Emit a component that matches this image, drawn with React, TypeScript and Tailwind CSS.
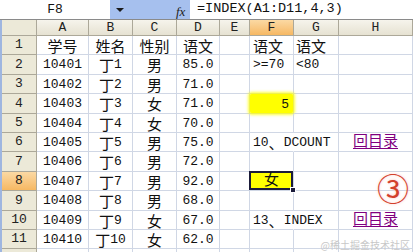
import React from "react";

const MONO = "font-['Liberation_Mono','Noto_Sans_CJK_SC',monospace]";

function T({ s, cjk = "text-[15px]" }: { s: string; cjk?: string }) {
  const parts: { t: string; c: boolean }[] = [];
  for (const ch of s) {
    const c = /[\u3000-\u303f\u4e00-\u9fff\u2460-\u24ff]/.test(ch);
    const last = parts[parts.length - 1];
    if (last && last.c === c) last.t += ch;
    else parts.push({ t: ch, c });
  }
  return (
    <>
      {parts.map((p, i) =>
        p.c ? (
          <span key={i} className={`${cjk} font-['Noto_Sans_CJK_SC',sans-serif] leading-none`}>
            {p.t}
          </span>
        ) : (
          <span key={i} className="text-[13px] leading-none">
            {p.t}
          </span>
        )
      )}
    </>
  );
}

const cols = ["A", "B", "C", "D", "E", "F", "G", "H"];
const rowHeights = [19, 20, 19, 20, 19, 19, 20, 19, 20, 19, 19];

const data: [string, string, string, string][] = [
  ["学号", "姓名", "性别", "语文"],
  ["10401", "丁1", "男", "85.0"],
  ["10402", "丁2", "男", "71.0"],
  ["10403", "丁3", "女", "71.0"],
  ["10404", "丁4", "女", "70.0"],
  ["10405", "丁5", "男", "75.0"],
  ["10406", "丁6", "男", "72.0"],
  ["10407", "丁7", "男", "92.0"],
  ["10408", "丁8", "男", "68.0"],
  ["10409", "丁9", "女", "67.0"],
  ["10410", "丁10", "女", "62.0"],
];

const cellBase = "relative border-r border-b border-[#d0d7e5] flex items-center whitespace-nowrap text-[#111]";

function Link() {
  return (
    <span className="text-[#800080] underline decoration-[1px] underline-offset-2">
      <T s="回目录" />
    </span>
  );
}

export default function App() {
  return (
    <div className={`w-[413px] h-[252px] overflow-hidden bg-white relative ${MONO}`}>
      {/* formula bar */}
      <div className="flex h-[20px] border-b border-[#8a8a8a]">
        <div className="w-[110px] flex items-center justify-center text-[13px] text-[#111] pt-[1px]">F8</div>
        <div className="w-[80px] bg-[#a6c0ee] flex items-center relative">
          <div className="ml-[6px] w-0 h-0 border-l-[4px] border-r-[4px] border-t-[4px] border-l-transparent border-r-transparent border-t-[#1a1a1a]" />
          <span className="absolute left-[66px] top-[2px] italic font-['Liberation_Serif',serif] text-[13px] text-[#222]">fx</span>
        </div>
        <div className="flex-1 flex items-center pl-[7px] text-[13.5px] text-[#111]">=INDEX(A1:D11,4,3)</div>
      </div>

      <div
        className="grid border-l-2 border-[#9fb6e0]"
        style={{
          gridTemplateColumns: "35px 52px 44px 44px 43px 30px 44px 45px 74px",
          gridTemplateRows: `16px ${rowHeights.map((h) => h + "px").join(" ")} 10px`,
        }}
      >
        {/* header row */}
        <div className="bg-[#ece9d8] border-r border-b border-[#aca899]" />
        {cols.map((c) => (
          <div
            key={c}
            className={`border-r border-b border-[#aca899] flex items-center justify-center text-[13px] text-[#222] ${
              c === "F" ? "bg-gradient-to-b from-[#fbd9a3] to-[#f6b862]" : "bg-gradient-to-b from-[#f6f4ec] to-[#e6e2d2]"
            }`}
          >
            {c}
          </div>
        ))}

        {data.map((r, i) => {
          const n = i + 1;
          return (
            <React.Fragment key={n}>
              <div
                className={`border-r border-b border-[#aca899] flex items-center justify-center text-[13px] text-[#222] ${
                  n === 8 ? "bg-gradient-to-b from-[#fbd9a3] to-[#f6b862]" : "bg-[#ece9d8]"
                }`}
              >
                {n}
              </div>
              {r.map((v, j) => (
                <div key={j} className={`${cellBase} justify-center`}>
                  <T s={v} />
                </div>
              ))}
              {/* E */}
              <div className={cellBase} />
              {/* F */}
              {n === 1 && (
                <div className={`${cellBase} pl-[3px]`}>
                  <T s="语文" />
                </div>
              )}
              {n === 2 && (
                <div className={`${cellBase} pl-[3px]`}>
                  <T s=">=70" />
                </div>
              )}
              {n === 4 && (
                <div className={`${cellBase} justify-end pr-[4px]`}>
                  <div className="absolute inset-0 bg-[#ffff00] rounded-[2px] shadow-[0_0_3px_2px_rgba(255,255,0,0.75)]" />
                  <span className="relative">
                    <T s="5" />
                  </span>
                </div>
              )}
              {n === 6 && (
                <div className={`${cellBase} pl-[3px] border-r-transparent z-10`}>
                  <T s="10、DCOUNT" />
                </div>
              )}
              {n === 8 && (
                <div className={`${cellBase} justify-center z-10`}>
                  <div className="absolute -left-[1px] -top-[1px] right-0 bottom-0 bg-[#ffff00] border-2 border-[#1b1b3a]" />
                  <div className="absolute -right-[3px] -bottom-[3px] w-[6px] h-[6px] bg-[#1b1b3a] border border-white" />
                  <span className="relative">
                    <T s="女" />
                  </span>
                </div>
              )}
              {n === 10 && (
                <div className={`${cellBase} pl-[3px] border-r-transparent z-10`}>
                  <T s="13、INDEX" />
                </div>
              )}
              {![1, 2, 4, 6, 8, 10].includes(n) && <div className={cellBase} />}
              {/* G */}
              {n === 1 ? (
                <div className={`${cellBase} pl-[2px]`}>
                  <T s="语文" />
                </div>
              ) : n === 2 ? (
                <div className={`${cellBase} pl-[2px]`}>
                  <T s="<80" />
                </div>
              ) : (
                <div className={cellBase} />
              )}
              {/* H */}
              {n === 6 || n === 10 ? (
                <div className={`${cellBase} justify-center`}>
                  <Link />
                </div>
              ) : n === 8 ? (
                <div className={`${cellBase} z-10`}>
                  <span className="absolute right-[3px] top-[1px] text-[32px] leading-[28px] text-[#d2402c] font-['Noto_Sans_CJK_SC',sans-serif] [text-shadow:0_0_3px_#ffc0b8]">
                    ③
                  </span>
                </div>
              ) : (
                <div className={cellBase} />
              )}
            </React.Fragment>
          );
        })}
        {/* partial row 12 */}
        <div className="bg-[#ece9d8] border-r border-[#aca899]" />
        {cols.map((c) => (
          <div key={c} className="border-r border-[#d0d7e5]" />
        ))}
      </div>

      <div className="absolute right-[3px] bottom-[2px] text-[10px] text-[#c8c8c8] font-['Noto_Sans_CJK_SC',sans-serif] leading-none">
        @稀土掘金技术社区
      </div>
    </div>
  );
}
